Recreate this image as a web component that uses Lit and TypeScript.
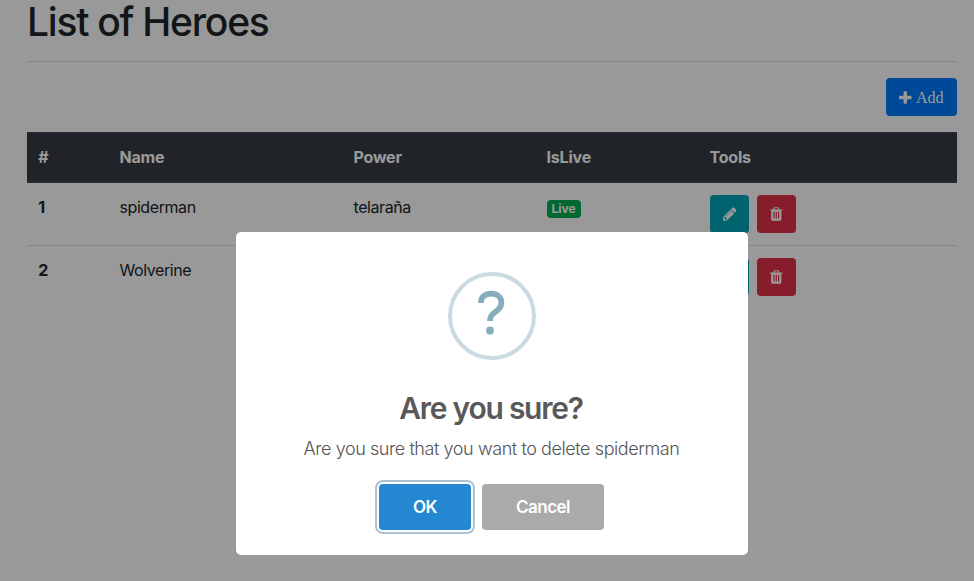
import { LitElement, html, css, svg } from "lit";
import { customElement, property } from "lit/decorators.js";

interface Hero {
  id: number;
  name: string;
  power: string;
  live: boolean;
}

/* Font Awesome 4 outlines, drawn in font units with the y axis pointing up. */
const ICONS = {
  plus: {
    width: 1408,
    d: "M1408 800v-192q0 -40 -28 -68t-68 -28h-416v-416q0 -40 -28 -68t-68 -28h-192q-40 0 -68 28t-28 68v416h-416q-40 0 -68 28t-28 68v192q0 40 28 68t68 28h416v416q0 40 28 68t68 28h192q40 0 68 -28t28 -68v-416h416q40 0 68 -28t28 -68z",
  },
  pencil: {
    width: 1536,
    d: "M363 0l91 91l-235 235l-91 -91v-107h128v-128h107zM886 928q0 22 -22 22q-10 0 -17 -7l-542 -542q-7 -7 -7 -17q0 -22 22 -22q10 0 17 7l542 542q7 7 7 17zM832 1120l416 -416l-832 -832h-416v416zM1515 1024q0 -53 -37 -90l-166 -166l-416 416l166 165q36 38 90 38q53 0 91 -38l235 -234q37 -39 37 -91z",
  },
  trash: {
    width: 1408,
    d: "M512 160v704q0 14 -9 23t-23 9h-64q-14 0 -23 -9t-9 -23v-704q0 -14 9 -23t23 -9h64q14 0 23 9t9 23zM768 160v704q0 14 -9 23t-23 9h-64q-14 0 -23 -9t-9 -23v-704q0 -14 9 -23t23 -9h64q14 0 23 9t9 23zM1024 160v704q0 14 -9 23t-23 9h-64q-14 0 -23 -9t-9 -23v-704q0 -14 9 -23t23 -9h64q14 0 23 9t9 23zM480 1152h448l-48 117q-7 9 -17 11h-317q-10 -2 -17 -11zM1408 1120v-64q0 -14 -9 -23t-23 -9h-96v-948q0 -83 -47 -143.500t-113 -60.500h-832q-66 0 -113 58.500t-47 141.500v952h-96q-14 0 -23 9t-9 23v64q0 14 9 23t23 9h309l70 167q15 37 54 63t79 26h320q40 0 79 -26t54 -63l70 -167h309q14 0 23 -9t9 -23z",
  },
};

@customElement("fa-icon")
export class FaIcon extends LitElement {
  @property() name: keyof typeof ICONS = "plus";

  static styles = css`
    :host { display: inline-flex; flex: none; }
    svg { display: block; height: 16px; width: auto; fill: currentColor; }
  `;

  render() {
    const icon = ICONS[this.name];
    return html`<svg viewBox="0 0 ${icon.width} 1792" aria-hidden="true">
      ${svg`<path transform="translate(0 1536) scale(1 -1)" d=${icon.d}></path>`}
    </svg>`;
  }
}

@customElement("heroes-table")
export class HeroesTable extends LitElement {
  @property({ attribute: false }) heroes: Hero[] = [];

  static styles = css`
    :host { display: block; }
    .row {
      display: grid;
      grid-template-columns: 80.5px 234px 193px 163.5px 1fr;
      line-height: 24px;
      letter-spacing: -0.42px;
    }
    .row > * { padding: 12px 0 12px 12px; }
    .row > :first-child { padding-left: 11.3px; }
    .head {
      box-sizing: border-box;
      height: 51px;
      background: #363c44;
      border-top: 1px solid #454d55;
      border-bottom: 2px solid #454d55;
      color: #fff;
      font-weight: 700;
      letter-spacing: -0.2px;
    }
    .head > :last-child { padding-left: 11.5px; }
    .body + .body { border-top: 1px solid #dee2e6; }
    .num { font-weight: 700; }
    .tools { display: flex; gap: 8px; }
    .btn {
      display: flex;
      align-items: center;
      justify-content: center;
      width: 39px;
      height: 38px;
      padding: 0;
      border: 0;
      border-radius: 4px;
      color: #fff;
    }
    .edit { background: #00a6b7; }
    .remove { background: #e22f48; }
    .badge {
      display: inline-block;
      padding: 3px 5px;
      border-radius: 4px;
      background: #00ae52;
      color: #fff;
      font-size: 12px;
      font-weight: 700;
      line-height: 12px;
      letter-spacing: 0;
    }
  `;

  render() {
    return html`
      <div class="row head">
        <div>#</div><div>Name</div><div>Power</div><div>IsLive</div><div>Tools</div>
      </div>
      ${this.heroes.map(
        (h) => html`<div class="row body">
          <div class="num">${h.id}</div>
          <div>${h.name}</div>
          <div>${h.power}</div>
          <div>${h.live ? html`<span class="badge">Live</span>` : null}</div>
          <div class="tools">
            <button class="btn edit" aria-label="Edit"><fa-icon name="pencil"></fa-icon></button>
            <button class="btn remove" aria-label="Delete"><fa-icon name="trash"></fa-icon></button>
          </div>
        </div>`
      )}
    `;
  }
}

@customElement("confirm-dialog")
export class ConfirmDialog extends LitElement {
  @property() heading = "";
  @property() message = "";

  static styles = css`
    :host {
      position: absolute;
      inset: 0;
      display: flex;
      justify-content: center;
      align-items: flex-start;
      padding: 232px 0 0 10px;
      background: rgba(0, 0, 0, 0.4);
    }
    .popup {
      box-sizing: border-box;
      width: 512px;
      height: 323px;
      display: flex;
      flex-direction: column;
      align-items: center;
      padding-top: 40px;
      border-radius: 5px;
      background: #fff;
    }
    .icon {
      box-sizing: border-box;
      width: 88px;
      height: 88px;
      border: 4px solid #c9dae1;
      border-radius: 50%;
    }
    .icon svg { display: block; width: 80px; height: 80px; fill: none; }
    .hook { stroke: #87adbd; stroke-width: 5.7; }
    .dot { fill: #87adbd; }
    .title {
      margin: 30px 2px 0 0;
      color: #595959;
      font-size: 30px;
      font-weight: 600;
      line-height: 37px;
      letter-spacing: -1.25px;
    }
    .text {
      margin: 11px 1px 0 0;
      color: #545454;
      font-size: 18px;
      font-weight: 300;
      line-height: 22px;
      letter-spacing: -0.42px;
    }
    .actions { display: flex; gap: 11px; margin: 24px 2px 0 0; }
    .action {
      height: 46px;
      padding: 0 0 0 1px;
      border: 0;
      border-radius: 4px;
      color: #fff;
      font: 600 17px/22px Inter, sans-serif;
      letter-spacing: -0.5px;
    }
    .ok {
      width: 92px;
      background: #2487d1;
      box-shadow: 0 0 0 2px #fff, 0 0 0 4px rgba(50, 100, 150, 0.4);
    }
    .cancel { width: 122px; background: #aaa; }
  `;

  render() {
    return html`<div class="popup" role="dialog" aria-modal="true">
      <div class="icon">
        <svg viewBox="0 0 80 80" aria-hidden="true">
          <path class="hook" d="M28.8 27C28.8 20.8 33.5 17.6 39.2 17.6C45.2 17.6 49.4 21.3 49.4 26.6C49.4 31 47.2 33.4 43.5 35.8C39.8 38.2 38 40.3 38 44V45"></path>
          <circle class="dot" cx="38" cy="54.5" r="3.9"></circle>
        </svg>
      </div>
      <h2 class="title">${this.heading}</h2>
      <p class="text">${this.message}</p>
      <div class="actions">
        <button class="action ok">OK</button>
        <button class="action cancel">Cancel</button>
      </div>
    </div>`;
  }
}

@customElement("app-root")
export class AppRoot extends LitElement {
  private heroes: Hero[] = [
    { id: 1, name: "spiderman", power: "telaraña", live: true },
    { id: 2, name: "Wolverine", power: "", live: false },
  ];

  static styles = css`
    :host {
      position: relative;
      display: block;
      box-sizing: border-box;
      height: 100vh;
      overflow: hidden;
      padding: 0 17px 0 27px;
      background: #fff;
      color: #212529;
      font: 16px/24px Inter, "Liberation Sans", sans-serif;
    }
    .title {
      margin: 0;
      padding-bottom: 17px;
      border-bottom: 1px solid #e0e0e0;
      font-size: 39px;
      font-weight: 500;
      line-height: 44px;
      letter-spacing: -1.25px;
    }
    .bar { display: flex; justify-content: flex-end; padding: 16px 0; }
    .add {
      display: flex;
      align-items: center;
      justify-content: center;
      gap: 4px;
      width: 71px;
      height: 38px;
      padding: 1px 0 0;
      border: 0;
      border-radius: 4px;
      background: #007bff;
      color: #fff;
      font: 16px/17px "Liberation Serif", serif;
    }
  `;

  render() {
    return html`
      <h1 class="title">List of Heroes</h1>
      <div class="bar">
        <button class="add"><fa-icon name="plus"></fa-icon><span>Add</span></button>
      </div>
      <heroes-table .heroes=${this.heroes}></heroes-table>
      <confirm-dialog
        heading="Are you sure?"
        message="Are you sure that you want to delete ${this.heroes[0].name}"
      ></confirm-dialog>
    `;
  }
}
